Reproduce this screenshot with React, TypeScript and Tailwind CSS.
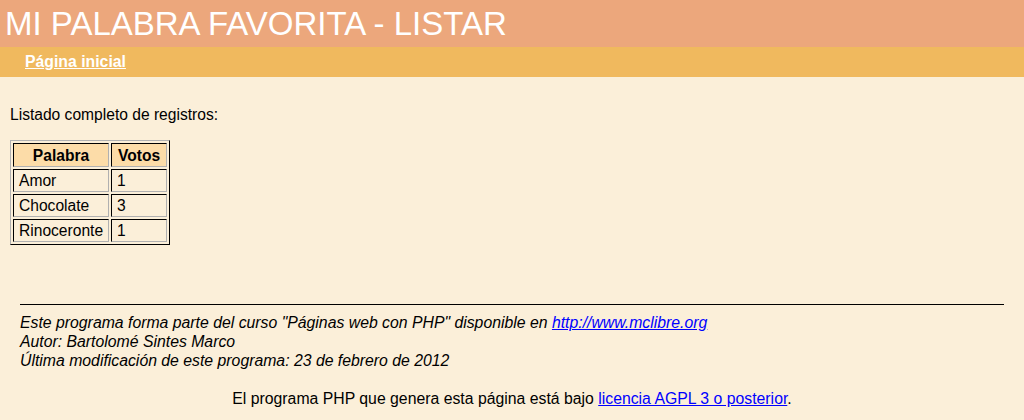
import React from "react";

const rows = [
  { palabra: "Amor", votos: 1 },
  { palabra: "Chocolate", votos: 3 },
  { palabra: "Rinoceronte", votos: 1 },
];

const cell =
  "border border-t-black border-l-black border-r-[#b0b0b0] border-b-[#b0b0b0] px-[5px] leading-[21px]";

export default function App() {
  return (
    <div className="min-h-[420px] bg-[#fbefd9] font-['Liberation_Sans',Arial,sans-serif] text-black">
      <header className="h-[47px] bg-[#eca77c] pl-[5px]">
        <h1 className="text-[33px] leading-[47px] text-white">
          MI PALABRA FAVORITA - LISTAR
        </h1>
      </header>
      <nav className="h-[30px] bg-[#f0b95e] pl-[25px]">
        <a href="#" className="text-[15.8px] font-bold leading-[30px] text-white underline">
          Página inicial
        </a>
      </nav>

      <main className="px-[10px] pt-[29px] text-[15.6px]">
        <p className="leading-[17px]">Listado completo de registros:</p>
        <table className="mt-[17px] border-separate border-spacing-[2px] border border-t-[#b0b0b0] border-l-[#b0b0b0] border-r-black border-b-black">
          <thead>
            <tr>
              <th className={`h-[24px] bg-[#fcdca8] font-bold ${cell}`}>Palabra</th>
              <th className={`w-[56px] bg-[#fcdca8] font-bold ${cell}`}>Votos</th>
            </tr>
          </thead>
          <tbody>
            {rows.map((r) => (
              <tr key={r.palabra}>
                <td className={cell}>{r.palabra}</td>
                <td className={cell}>{r.votos}</td>
              </tr>
            ))}
          </tbody>
        </table>
      </main>

      <footer className="mx-[20px] mt-[59px] border-t border-black pt-[8px] text-[15.8px]">
        <p className="italic leading-[19px]">
          Este programa forma parte del curso "Páginas web con PHP" disponible en{" "}
          <a href="#" className="text-[#0000ff] underline">http://www.mclibre.org</a>
        </p>
        <p className="italic leading-[19px]">Autor: Bartolomé Sintes Marco</p>
        <p className="italic leading-[19px]">
          Última modificación de este programa: 23 de febrero de 2012
        </p>
        <p className="mt-[19px] text-center leading-[19px]">
          El programa PHP que genera esta página está bajo{" "}
          <a href="#" className="text-[#0000ff] underline">licencia AGPL 3 o posterior</a>.
        </p>
      </footer>
    </div>
  );
}
